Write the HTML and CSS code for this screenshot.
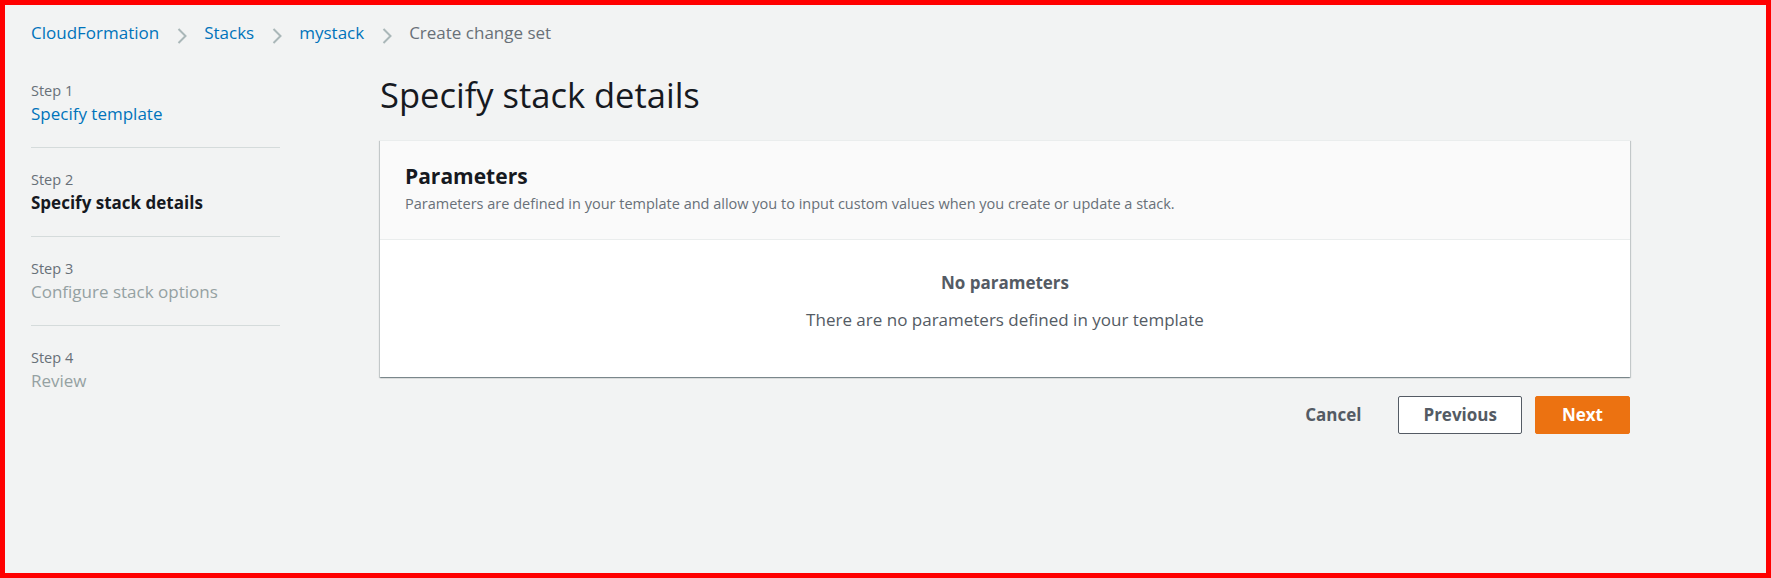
FILE: index.html
```html
<!DOCTYPE html>
<html lang="en">
<head>
<meta charset="utf-8">
<title>Create change set</title>
<link rel="stylesheet" href="styles.css">
</head>
<body>
<div class="frame">
  <nav class="breadcrumbs">
    <a class="crumb" href="#">CloudFormation</a>
    <svg class="chev" width="10" height="16" viewBox="0 0 10 16"><path d="M1.5 1 L8.5 8 L1.5 15" fill="none" stroke="#aab7b8" stroke-width="2"/></svg>
    <a class="crumb" href="#">Stacks</a>
    <svg class="chev" width="10" height="16" viewBox="0 0 10 16"><path d="M1.5 1 L8.5 8 L1.5 15" fill="none" stroke="#aab7b8" stroke-width="2"/></svg>
    <a class="crumb" href="#">mystack</a>
    <svg class="chev" width="10" height="16" viewBox="0 0 10 16"><path d="M1.5 1 L8.5 8 L1.5 15" fill="none" stroke="#aab7b8" stroke-width="2"/></svg>
    <span class="crumb current">Create change set</span>
  </nav>
  <div class="layout">
    <ol class="steps">
      <li class="step">
        <div class="step-label">Step 1</div>
        <a class="step-title link" href="#">Specify template</a>
      </li>
      <li class="step">
        <div class="step-label">Step 2</div>
        <div class="step-title active">Specify stack details</div>
      </li>
      <li class="step">
        <div class="step-label">Step 3</div>
        <div class="step-title disabled">Configure stack options</div>
      </li>
      <li class="step last">
        <div class="step-label">Step 4</div>
        <div class="step-title disabled">Review</div>
      </li>
    </ol>
    <main class="main">
      <h1 class="page-title">Specify stack details</h1>
      <section class="card">
        <header class="card-header">
          <h2 class="card-title">Parameters</h2>
          <p class="card-desc">Parameters are defined in your template and allow you to input custom values when you create or update a stack.</p>
        </header>
        <div class="card-body">
          <div class="empty-title">No parameters</div>
          <p class="empty-text">There are no parameters defined in your template</p>
        </div>
      </section>
      <div class="actions">
        <button class="btn btn-link">Cancel</button>
        <button class="btn btn-normal">Previous</button>
        <button class="btn btn-primary">Next</button>
      </div>
    </main>
  </div>
</div>
</body>
</html>
```
FILE: styles.css
```css
* { box-sizing: border-box; }
html, body { margin: 0; padding: 0; }
body {
  font-family: "Open Sans", "Noto Sans", sans-serif;
  color: #16191f;
  background: #f2f3f3;
}
.frame {
  height: 578px;
  border: 5px solid #ff0000;
  background: #f2f3f3;
  padding: 15px 26px 0 26px;
  overflow: hidden;
}
.breadcrumbs {
  display: flex;
  align-items: center;
  gap: 17.5px;
  height: 25px;
}
.crumb {
  font-size: 17px;
  line-height: 25px;
  color: #0073bb;
  text-decoration: none;
  white-space: nowrap;
}
.crumb.current { color: #687078; }
.chev { display: block; margin-top: 6px; flex: none; }

.layout {
  display: grid;
  grid-template-columns: 249px 1250px;
  column-gap: 100px;
  margin-top: 14px;
  align-items: start;
}
.steps {
  list-style: none;
  margin: 0;
  padding: 0;
}
.step {
  padding: 21px 0 21px 0;
  border-bottom: 1px solid #d5dbdb;
}
.step.last { border-bottom: none; }
.step-label {
  font-size: 14.5px;
  line-height: 21px;
  color: #687078;
}
.step-title {
  display: block;
  font-size: 17px;
  line-height: 25px;
  text-decoration: none;
}
.step-title.link { color: #0073bb; }
.step-title.active { color: #16191f; font-weight: 700; }
.step-title.disabled { color: #95a1a2; }

.main { padding-top: 14px; }
.page-title {
  margin: 0;
  font-size: 34.5px;
  line-height: 44px;
  font-weight: 400;
  color: #16191f;
}
.card {
  margin-top: 23px;
  background: #ffffff;
  border-top: 1px solid #eaeded;
  box-shadow: 0 1px 1px 0 rgba(0, 28, 36, 0.3), 1px 1px 1px 0 rgba(0, 28, 36, 0.15), -1px 1px 1px 0 rgba(0, 28, 36, 0.15);
}
.card-header {
  background: #fafafa;
  border-bottom: 1px solid #eaeded;
  padding: 21px 25px 25px 25px;
}
.card-title {
  margin: 0;
  font-size: 21px;
  line-height: 28px;
  font-weight: 700;
  color: #16191f;
}
.card-desc {
  margin: 4px 0 0 0;
  font-size: 14.5px;
  line-height: 20px;
  color: #687078;
}
.card-body {
  padding: 31px 25px 45px 25px;
  text-align: center;
  color: #545b64;
}
.empty-title {
  font-size: 17px;
  line-height: 24px;
  font-weight: 700;
}
.empty-text {
  margin: 13px 0 0 0;
  font-size: 17px;
  line-height: 24px;
}
.actions {
  display: flex;
  justify-content: flex-end;
  gap: 13px;
  margin-top: 19px;
}
.btn {
  font-family: inherit;
  font-size: 17px;
  font-weight: 700;
  line-height: 24px;
  height: 38px;
  padding: 0 25px;
  border-radius: 2px;
  border: 1px solid transparent;
  background: none;
  cursor: pointer;
}
.btn-link { color: #545b64; padding: 0 23px; }
.btn-normal { color: #545b64; background: #ffffff; border-color: #545b64; padding: 0 24px; }
.btn-primary { color: #ffffff; background: #ec7211; border-color: #ec7211; padding: 0 26px; }
```
